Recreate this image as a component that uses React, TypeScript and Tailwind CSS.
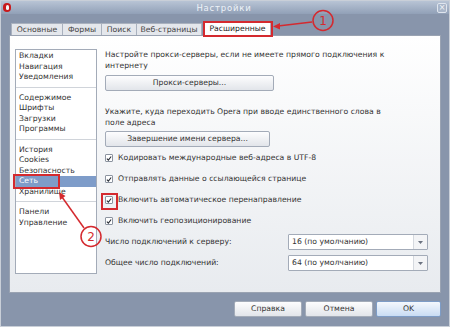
import React from 'react';

const font = { fontFamily: '"DejaVu Sans", Verdana, sans-serif' };

const tabs = [
    { label: 'Основные', w: 'w-[52px]' },
    { label: 'Формы', w: 'w-[40px]' },
    { label: 'Поиск', w: 'w-[36px]' },
    { label: 'Веб-страницы', w: 'w-[66px]' },
];

const groups = [
    ['Вкладки', 'Навигация', 'Уведомления'],
    ['Содержимое', 'Шрифты', 'Загрузки', 'Программы'],
    ['История', 'Cookies', 'Безопасность', 'Сеть', 'Хранилище'],
    ['Панели', 'Управление'],
];

const checks = [
    'Кодировать международные веб-адреса в UTF-8',
    'Отправлять данные о ссылающейся странице',
    'Включить автоматическое перенаправление',
    'Включить геопозиционирование',
];

function Button({ children, className = '' }: { children: React.ReactNode; className?: string }) {
    return (
        <div className={`h-[16px] flex items-center justify-center rounded-[2px] border border-[#a3abb8] bg-gradient-to-b from-[#fdfdfe] to-[#e2e5ea] text-[#333] ${className}`}>
            {children}
        </div>
    );
}

function Check() {
    return (
        <div className="w-[8px] h-[8px] border border-[#8c94a0] bg-white flex items-center justify-center rounded-[1px]">
            <svg width="7" height="7" viewBox="0 0 7 7">
                <path d="M1 3.6 L2.8 5.4 L6 1.2" stroke="#2a2f38" strokeWidth="1.3" fill="none" />
            </svg>
        </div>
    );
}

function Select({ value }: { value: string }) {
    return (
        <div className="w-[140px] h-[16px] flex border border-[#a3abb8] bg-white rounded-[1px]">
            <div className="flex-1 flex items-center pl-[3px] text-[#333]">{value}</div>
            <div className="w-[14px] flex items-center justify-center border-l border-[#d5d9df] bg-[#f3f4f6]">
                <svg width="5" height="3" viewBox="0 0 5 3"><path d="M0 0 L5 0 L2.5 3 Z" fill="#6b7280" /></svg>
            </div>
        </div>
    );
}

export default function App() {
    return (
        <div className="w-[450px] h-[327px] relative overflow-hidden bg-[#8895ab] border border-[#c9cfd8] text-[7.7px] leading-[10px] text-[#333]" style={font}>
            {/* title bar */}
            <div className="h-[13px] flex items-center justify-between px-[2px] bg-gradient-to-b from-[#b8c4d5] to-[#91a0b7]">
                <div className="w-[8px] h-[9px] rounded-full bg-[#c8191b] flex items-center justify-center">
                    <div className="w-[3px] h-[5px] rounded-full bg-[#f5f5f5]" />
                </div>
                <span className="text-[#eef2f8] text-[8.5px] tracking-[0.8px]">Настройки</span>
                <div className="w-[10px] h-[10px] border border-[#dfe5ee] rounded-[2px] bg-[#a9b6c9] flex items-center justify-center text-[#f3f5f8] text-[8px] leading-none">×</div>
            </div>

            <div className="px-[8px] pt-[8px]">
                {/* tabs */}
                <div className="flex items-end h-[13px] pl-[2px]">
                    {tabs.map((t) => (
                        <div key={t.label} className={`${t.w} h-[12px] flex items-center justify-center bg-[#e4e7ec] border border-b-0 border-[#a9b1be] rounded-t-[1px] -mr-px text-[#444]`}>
                            {t.label}
                        </div>
                    ))}
                    <div className="w-[67px] h-[13px] ml-[3px] flex items-center justify-center bg-white border border-b-0 border-[#a9b1be] text-[#222]">
                        Расширенные
                    </div>
                </div>

                {/* panel */}
                <div className="h-[258px] bg-gradient-to-b from-white to-[#e8ebef] border border-[#9aa3b2] flex pl-[5px] pt-[13px]">
                    <div className="w-[82px] h-[225px] bg-white border border-[#a3abb8] py-[1px]">
                        {groups.map((g, gi) => (
                            <div key={gi} className={gi > 0 ? 'border-t border-[#d0d4da] mt-[4px] pt-[5px]' : ''}>
                                {g.map((item) => (
                                    <div key={item} className={`h-[10.5px] flex items-center pl-[3px] ${item === 'Сеть' ? 'bg-[#7e9cc9] text-white' : 'text-[#333]'}`}>
                                        {item}
                                    </div>
                                ))}
                            </div>
                        ))}
                    </div>

                    <div className="flex-1 pl-[8px] pr-[12px]">
                        <p className="leading-[10.5px] max-w-[286px] mt-[1px]">Настройте прокси-серверы, если не имеете прямого подключения к интернету</p>
                        <Button className="w-[169px] mt-[4px]">Прокси-серверы...</Button>
                        <p className="leading-[10.5px] max-w-[286px] mt-[16px]">Укажите, куда переходить Opera при вводе единственного слова в поле адреса</p>
                        <Button className="w-[165px] mt-[3px]">Завершение имени сервера...</Button>
                        <div className="mt-[6px] flex flex-col gap-[11px]">
                            {checks.map((c) => (
                                <div key={c} className="flex items-center gap-[5px] h-[10px]">
                                    <Check />
                                    <span>{c}</span>
                                </div>
                            ))}
                        </div>
                        <div className="mt-[8px] flex flex-col gap-[5px]">
                            <div className="flex items-center justify-between">
                                <span>Число подключений к серверу:</span>
                                <Select value="16 (по умолчанию)" />
                            </div>
                            <div className="flex items-center justify-between">
                                <span>Общее число подключений:</span>
                                <Select value="64 (по умолчанию)" />
                            </div>
                        </div>
                    </div>
                </div>

                {/* bottom buttons */}
                <div className="flex justify-end gap-[3px] mt-[8px]">
                    <Button className="w-[68px]">Справка</Button>
                    <Button className="w-[68px]">Отмена</Button>
                    <div className="w-[65px] h-[16px] flex items-center justify-center rounded-[2px] border border-[#7d9cc6] bg-gradient-to-b from-[#f4f8fd] to-[#c9dcf3] text-[#333]">OK</div>
                </div>
            </div>

            {/* annotations */}
            <svg className="absolute inset-0 pointer-events-none" width="450" height="327">
                <rect x="203" y="21" width="68" height="14" fill="none" stroke="#d42a2f" strokeWidth="2" />
                <line x1="311" y1="21" x2="277" y2="25" stroke="#d42a2f" strokeWidth="1.5" />
                <path d="M272 25.5 L279 22 L279 28.5 Z" fill="#d42a2f" />
                <circle cx="322" cy="19.5" r="10" fill="none" stroke="#d42a2f" strokeWidth="1.5" />
                <text x="322" y="24" textAnchor="middle" fill="#d42a2f" fontSize="12" fontFamily="DejaVu Sans, sans-serif">1</text>

                <rect x="13" y="174" width="45" height="13" fill="none" stroke="#d42a2f" strokeWidth="2" />
                <rect x="101" y="193" width="15" height="15" fill="none" stroke="#d42a2f" strokeWidth="2" />
                <line x1="83" y1="227" x2="61" y2="196" stroke="#d42a2f" strokeWidth="1.5" />
                <path d="M58 191 L64.5 195 L59 199 Z" fill="#d42a2f" />
                <circle cx="90" cy="235.5" r="10" fill="none" stroke="#d42a2f" strokeWidth="1.5" />
                <text x="90" y="240" textAnchor="middle" fill="#d42a2f" fontSize="12" fontFamily="DejaVu Sans, sans-serif">2</text>
            </svg>
        </div>
    );
}
